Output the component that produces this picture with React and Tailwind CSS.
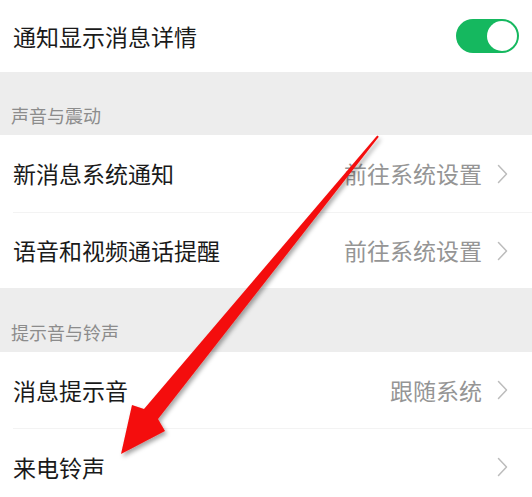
import React from 'react';

const font = { fontFamily: '"Noto Sans CJK SC", "Noto Sans", sans-serif' };

const Chevron = () => (
  <svg width="11" height="20" viewBox="0 0 11 20" className="shrink-0">
    <polyline points="1.5,1.5 9.5,10 1.5,18.5" fill="none" stroke="#bcbcbc" strokeWidth="1.5" strokeLinecap="round" strokeLinejoin="round" />
  </svg>
);

const Toggle = () => (
  <div className="relative w-[63px] h-[34px] rounded-full bg-[#15b85f]">
    <div className="absolute right-[2px] top-[2px] w-[30px] h-[30px] rounded-full bg-white" />
  </div>
);

const SectionHeader = ({ title, h }) => (
  <div className={`flex items-end bg-[#ededed] pl-[11px] pb-[11px] ${h}`}>
    <span className="text-[18px] leading-none text-[#8c8c8c]">{title}</span>
  </div>
);

const Row = ({ label, value, divider, h = 'h-[77px]' }) => (
  <div className="pl-[13px] bg-white">
    <div className={`flex items-center justify-between pr-[24px] ${h} ${divider ? 'border-t border-[#f3f3f3]' : ''}`}>
      <span className="text-[23px] leading-none text-[#1a1a1a]">{label}</span>
      <div className="flex items-center gap-[15px]">
        {value && <span className="text-[23px] leading-none text-[#959595]">{value}</span>}
        <Chevron />
      </div>
    </div>
  </div>
);

const Arrow = () => (
  <svg className="absolute inset-0 pointer-events-none" width="532" height="497" viewBox="0 0 532 497">
    <defs>
      <filter id="shadow" x="-20%" y="-20%" width="140%" height="140%">
        <feDropShadow dx="2" dy="3" stdDeviation="2" floodColor="#000" floodOpacity="0.35" />
      </filter>
    </defs>
    <polygon
      points="377.2,135.4 378.8,136.8 158,419 165,431 121,454 132,405 144,409"
      fill="#f40c0c"
      filter="url(#shadow)"
    />
  </svg>
);

export default function App() {
  return (
    <div className="relative w-[532px] h-[497px] overflow-hidden bg-white" style={font}>
      <div className="flex h-[72px] items-center justify-between pl-[13px] pr-[13px] bg-white">
        <span className="text-[23px] leading-none text-[#1a1a1a]">通知显示消息详情</span>
        <Toggle />
      </div>
      <SectionHeader title="声音与震动" h="h-[63px]" />
      <Row label="新消息系统通知" value="前往系统设置" />
      <Row label="语音和视频通话提醒" value="前往系统设置" divider h="h-[76px]" />
      <SectionHeader title="提示音与铃声" h="h-[64px]" />
      <Row label="消息提示音" value="跟随系统" h="h-[76px]" />
      <Row label="来电铃声" divider />
      <Arrow />
    </div>
  );
}
